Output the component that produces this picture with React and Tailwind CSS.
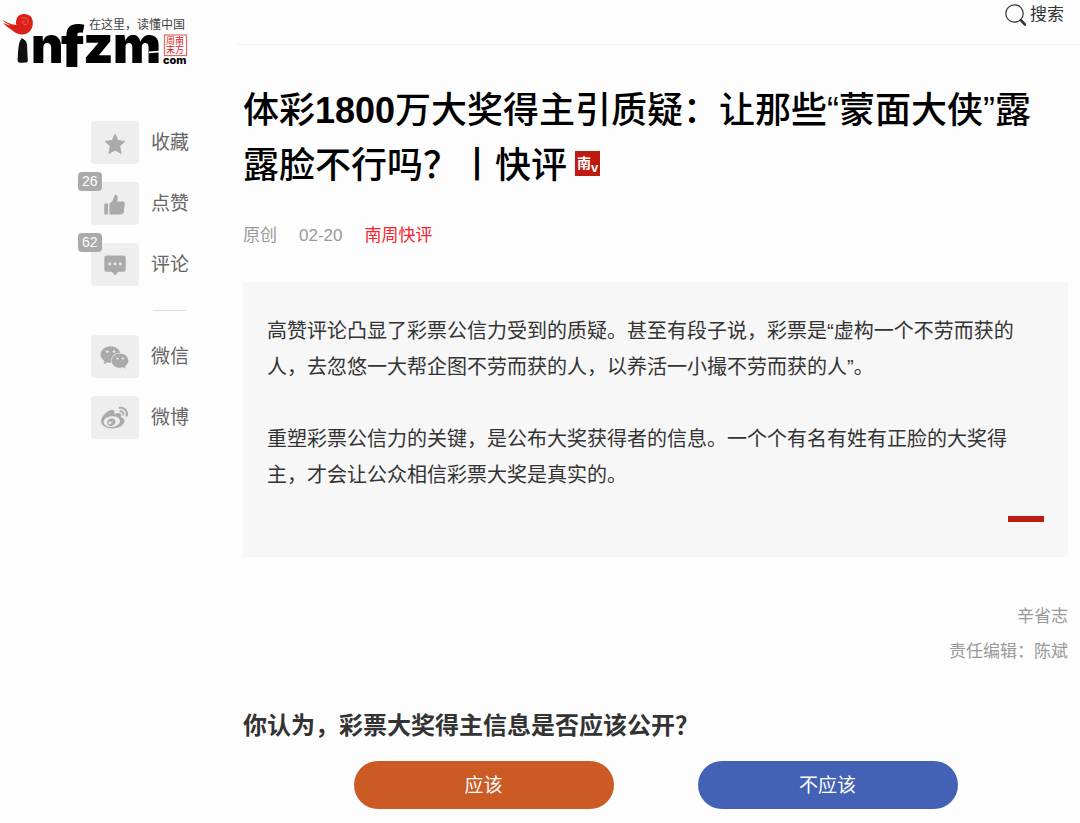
import { FaWeibo, FaWeixin } from "react-icons/fa";

/* ================= ICONS ================= */
function StarIcon() {
  return (
    <svg width="22" height="22" viewBox="0 0 22 22" fill="currentColor" stroke="currentColor" strokeWidth="1" strokeLinejoin="round" aria-hidden="true">
      <path d="M11 1.2L13.9 7.6L20.8 8.4L15.7 13.1L17.1 20.5L11 17L4.9 20.5L6.3 13.1L1.2 8.4L8.1 7.6Z" />
    </svg>
  );
}

function ThumbIcon() {
  return (
    <svg width="21" height="21" viewBox="0 0 21 21" fill="currentColor" aria-hidden="true">
      <path d="M0.3 9.5H4V20.5H1.2Q0.3 20.5 0.3 19.6Z" />
      <path d="M5.4 9.4C8.6 7.8 9.6 5 10.2 1.8C10.5 0.3 12.6 0.3 13.3 1.8C14.1 3.6 13.7 5.8 12.9 7.6H18.6C20.3 7.6 21 8.6 20.7 10.2L19.9 17.8C19.6 19.6 18.4 20.5 16.6 20.5H5.4Z" />
    </svg>
  );
}

function CommentIcon() {
  return (
    <svg width="22" height="21" viewBox="0 0 22 21" aria-hidden="true">
      <path
        fill="currentColor"
        d="M2.6 0.5H19.4Q21.7 0.5 21.7 2.8V14.4Q21.7 16.7 19.4 16.7H14.2L11 20.6L7.8 16.7H2.6Q0.3 16.7 0.3 14.4V2.8Q0.3 0.5 2.6 0.5Z"
      />
      <g fill="#eee">
        <circle cx="5.7" cy="9" r="1.4" />
        <circle cx="11" cy="9" r="1.4" />
        <circle cx="16.3" cy="9" r="1.4" />
      </g>
    </svg>
  );
}

function SearchIcon() {
  return (
    <svg width="21" height="22" viewBox="0 0 21 22" fill="none" stroke="#333" aria-hidden="true">
      <circle cx="9.5" cy="9.5" r="8.7" strokeWidth="1.2" />
      <path d="M15 15.2L17 17.2" strokeWidth="1.4" />
      <path d="M16.3 16.6L20 20.6" strokeWidth="2.6" strokeLinecap="round" />
    </svg>
  );
}

function NanBadge() {
  return (
    <svg
      className="ml-2 inline-block align-[2px]"
      width="25"
      height="25"
      viewBox="0 0 25 25"
      role="img"
      aria-label="南"
    >
      <rect width="25" height="25" fill="#bd1a12" />
      <g fill="#fff" fontWeight="700">
        <text x="2" y="17" fontSize="14" fontFamily="Noto Sans CJK SC, sans-serif">南</text>
        <text x="16" y="21" fontSize="13" fontFamily="Liberation Sans, sans-serif">v</text>
      </g>
    </svg>
  );
}

function Logo() {
  return (
    <svg width="192" height="74" viewBox="0 0 192 74" role="img" aria-label="infzm.com">
      {/* bird */}
      <path
        d="M16.5 19.5C17.5 15 22 13.7 26 14.2C31 14.8 33.3 19 32.8 24C32.3 30 28 34.5 22.5 34.6C17 34.6 14.3 32 11.5 29.8C8.5 27.5 5 25.8 3 22.4C6 24.4 8 24.5 10.5 25.6C8 23.8 4.5 23 2.2 19.8C6 22.3 12 25 16.5 25C15.5 23.5 16 21 16.5 19.5Z"
        fill="#dc2018"
      />
      <path d="M21 18.2C25.5 16.8 29 19 28.2 22.5C27.4 25.7 23 25.3 22.6 22.6C22.5 21.2 24.5 20.4 25.2 21.7" fill="none" stroke="#ee766e" strokeWidth="0.8" />
      {/* brush stem */}
      <path d="M21.8 38.2C24.5 39.5 26.7 41 27 44.5L27.8 61Q27.4 63 25 62.4Q21.5 63.2 18.4 62.2Q17.2 61.4 17.8 57C18.2 50 18.3 42 21.8 38.2Z" fill="#111" />
      <g fontWeight="900" fontFamily="Inter, sans-serif">
        <text x="31" y="63" fontSize="50">n</text>
        <text x="61" y="67" fontSize="56">f</text>
        <text x="83" y="63" fontSize="52">z</text>
        <text x="113" y="63" fontSize="51">m</text>
      </g>
      <path d="M149 52.4L162 51.4" stroke="#fdfdfd" strokeWidth="1.6" />
      <text x="89" y="29" fontSize="12" fill="#444" fontFamily="Noto Sans CJK SC, sans-serif">
        在这里，读懂中国
      </text>
      {/* red seal */}
      <rect x="164.5" y="35" width="22" height="20.5" fill="#fff" stroke="#e06a66" strokeWidth="1.2" />
      <g fontSize="9" fill="#dc2018" fontFamily="Noto Sans CJK SC, sans-serif">
        <text x="166" y="44">周南</text>
        <text x="166" y="53">末方</text>
      </g>
      <text x="163" y="64" fontSize="11" fontWeight="800" fontFamily="Inter, sans-serif">com</text>
    </svg>
  );
}

/* ================= SIDEBAR ================= */
const actions = [
  { label: "收藏", icon: <StarIcon /> },
  { label: "点赞", icon: <ThumbIcon />, count: 26 },
  { label: "评论", icon: <CommentIcon />, count: 62 },
];

const shares = [
  { label: "微信", icon: <FaWeixin size={29} /> },
  { label: "微博", icon: <FaWeibo size={27} /> },
];

function ActionButton({ label, icon, count }) {
  return (
    <button type="button" className="flex items-center gap-3 text-[19px] leading-6 text-[#666]">
      <span className="relative flex h-[43px] w-12 items-center justify-center rounded bg-[#eee] pr-px pt-[2px] text-[#aaa]">
        {icon}
        {count && (
          <span className="absolute -left-[13px] -top-[10px] rounded bg-[#aaa] px-1 text-sm leading-[19px] text-white">
            {count}
          </span>
        )}
      </span>
      {label}
    </button>
  );
}

/* ================= PAGE ================= */
export default function App() {
  return (
    <div className="flex min-h-screen bg-[#fdfdfd] font-['Liberation_Sans','Noto_Sans_CJK_SC',sans-serif] text-[#333]">
      <aside className="w-[237px] shrink-0">
        <a href="#" className="block">
          <Logo />
        </a>
        <div className="mt-[47px] flex flex-col items-start gap-[18px] pl-[91px]">
          {actions.map((item) => (
            <ActionButton key={item.label} {...item} />
          ))}
        </div>
        <hr className="mb-6 ml-[153px] mt-6 w-[33px] border-[#ddd]" />
        <div className="flex flex-col items-start gap-[18px] pl-[91px]">
          {shares.map((item) => (
            <ActionButton key={item.label} {...item} />
          ))}
        </div>
      </aside>

      <div className="min-w-0 flex-1">
        <header className="flex h-[45px] items-start justify-end border-b border-[#f0f0f0] pr-4 pt-1">
          <button type="button" className="flex items-center gap-1 text-[17px] leading-[22px]">
            <SearchIcon />
            搜索
          </button>
        </header>

        <main className="pb-3 pl-[6px] pr-3">
          <h1 className="mt-[38px] pr-3 text-4xl leading-[55px] font-medium text-black">
            体彩<span className="font-bold">1800</span>万大奖得主引质疑：让那些“蒙面大侠”露露脸不行吗？丨快评
            <NanBadge />
          </h1>

          <div className="mt-[31px] flex gap-[22px] text-[17px] leading-6 text-[#999]">
            <span>原创</span>
            <span>02-20</span>
            <a href="#" className="text-[#f5222d]">南周快评</a>
          </div>

          <section className="mt-[34px] bg-[#f7f7f7] px-6 pb-[35px] pt-[31px] text-xl leading-9">
            <p>
              高赞评论凸显了彩票公信力受到的质疑。甚至有段子说，彩票是“虚构一个不劳而获的人，去忽悠一大帮企图不劳而获的人，以养活一小撮不劳而获的人”。
            </p>
            <p className="mt-9">
              重塑彩票公信力的关键，是公布大奖获得者的信息。一个个有名有姓有正脸的大奖得主，才会让公众相信彩票大奖是真实的。
            </p>
            <div className="ml-auto mt-[23px] h-[6px] w-9 bg-[#bd1a12]" />
          </section>

          <div className="mt-[42px] text-right text-[17px] leading-[35px] text-[#999]">
            <p>辛省志</p>
            <p>责任编辑：陈斌</p>
          </div>

          {/* ================= POLL ================= */}
          <h2 className="mt-[39px] text-2xl leading-9 font-bold">
            你认为，彩票大奖得主信息是否应该公开？
          </h2>
          <div className="mt-[17px] flex justify-center gap-[84px] text-[19px] text-white">
            <button type="button" className="h-12 w-[260px] rounded-full bg-[#cb5a24] pt-[2px]">
              应该
            </button>
            <button type="button" className="h-12 w-[260px] rounded-full bg-[#4362b5] pt-[2px]">
              不应该
            </button>
          </div>
        </main>
      </div>
    </div>
  );
}
